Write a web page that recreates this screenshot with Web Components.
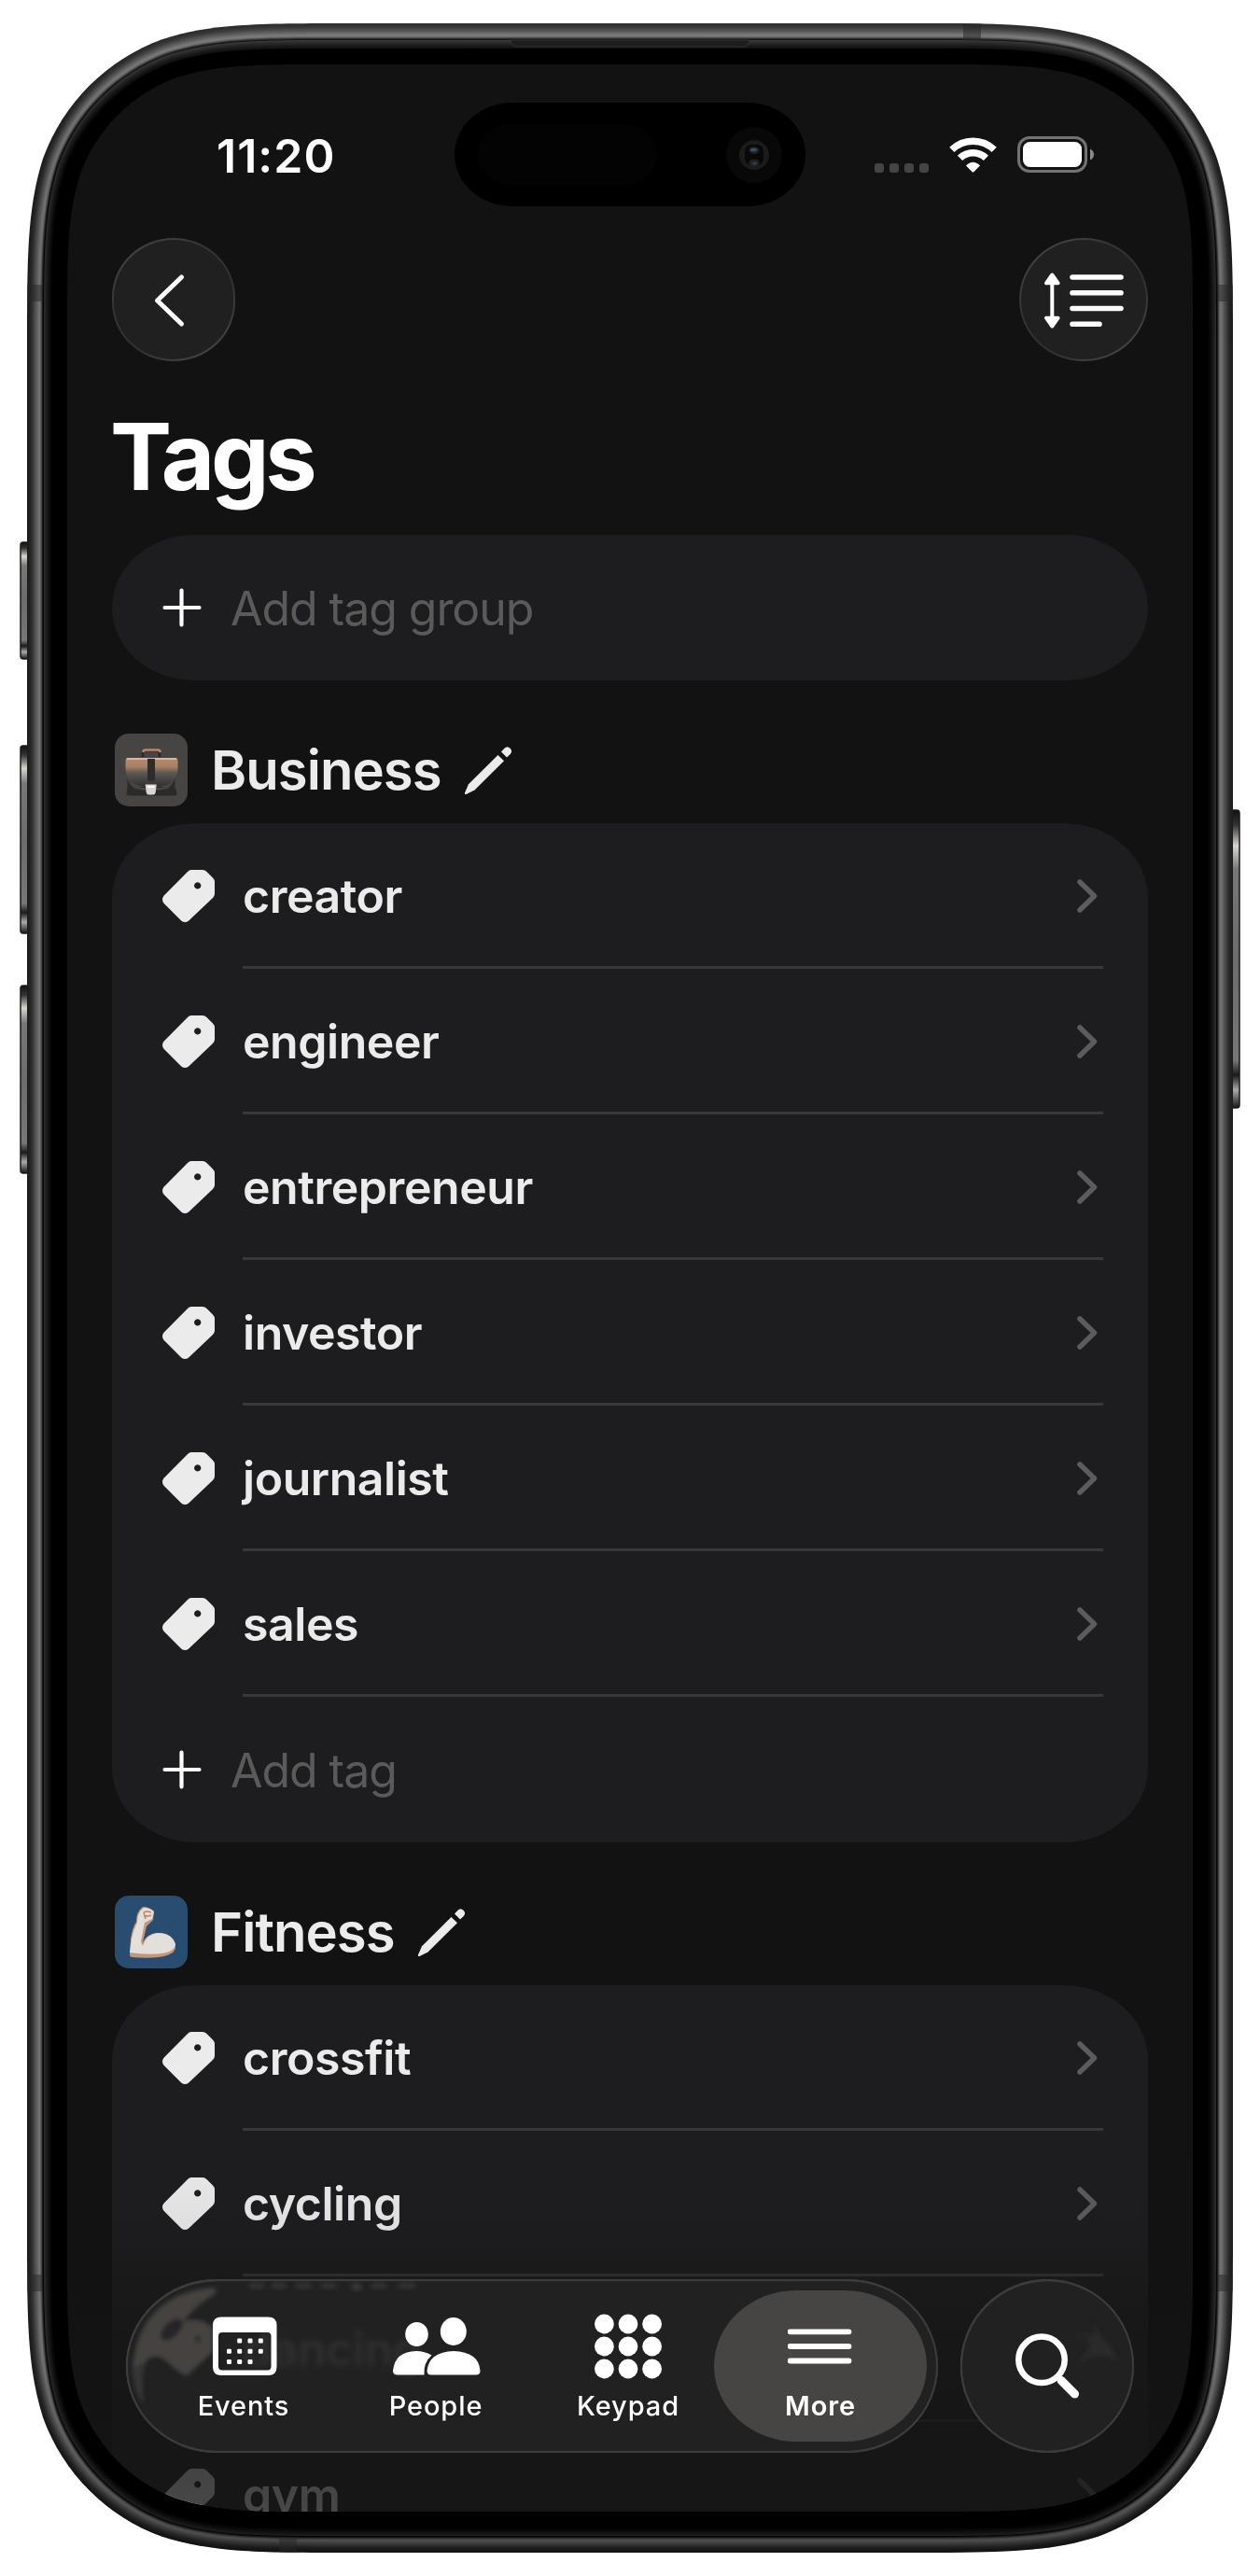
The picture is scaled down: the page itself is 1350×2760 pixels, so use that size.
<!DOCTYPE html>
<html lang="en">
<head>
<meta charset="utf-8">
<title>Tags</title>
<style>
  body {
    margin: 0;
    background: #fff;
    font-family: Inter, "Liberation Sans", sans-serif;
    color: #ebebeb;
  }
</style>
</head>
<body>
<phone-frame>
  <status-bar time="11:20"></status-bar>
  <nav-bar></nav-bar>
  <page-title>Tags</page-title>
  <list-card><add-row>Add tag group</add-row></list-card>

  <tag-section name="Business" icon="briefcase">
    <tag-row>creator</tag-row>
    <tag-row>engineer</tag-row>
    <tag-row>entrepreneur</tag-row>
    <tag-row>investor</tag-row>
    <tag-row>journalist</tag-row>
    <tag-row>sales</tag-row>
    <add-row>Add tag</add-row>
  </tag-section>

  <tag-section name="Fitness" icon="arm">
    <tag-row>crossfit</tag-row>
    <tag-row>cycling</tag-row>
    <tag-row>dancing</tag-row>
    <tag-row>gym</tag-row>
  </tag-section>

  <tab-bar slot="overlay">
    <tab-item icon="events">Events</tab-item>
    <tab-item icon="people">People</tab-item>
    <tab-item icon="keypad">Keypad</tab-item>
    <tab-item icon="more" active>More</tab-item>
  </tab-bar>
</phone-frame>

<script>
// rounded rect with continuous corners
function squircle(x, y, w, h, r) {
  const R = x + w;
  const B = y + h;
  const a = 1.52866 * r, b = 1.08849 * r, c = 0.86841 * r, d = 0.63149 * r;
  const e = 0.37282 * r, f = 0.16906 * r, g = 0.07491 * r;
  return `M${x + a} ${y}H${R - a}
    C${R - b} ${y} ${R - c} ${y} ${R - d} ${y + g}
    C${R - e} ${y + f} ${R - f} ${y + e} ${R - g} ${y + d}
    C${R} ${y + c} ${R} ${y + b} ${R} ${y + a}V${B - a}
    C${R} ${B - b} ${R} ${B - c} ${R - g} ${B - d}
    C${R - f} ${B - e} ${R - e} ${B - f} ${R - d} ${B - g}
    C${R - c} ${B} ${R - b} ${B} ${R - a} ${B}H${x + a}
    C${x + b} ${B} ${x + c} ${B} ${x + d} ${B - g}
    C${x + e} ${B - f} ${x + f} ${B - e} ${x + g} ${B - d}
    C${x} ${B - c} ${x} ${B - b} ${x} ${B - a}V${y + a}
    C${x} ${y + b} ${x} ${y + c} ${x + g} ${y + d}
    C${x + f} ${y + e} ${x + e} ${y + f} ${x + d} ${y + g}
    C${x + c} ${y} ${x + b} ${y} ${x + a} ${y}Z`.replace(/\s+/g, ' ');
}

class PhoneFrame extends HTMLElement {
  constructor() {
    super();
    this.attachShadow({ mode: 'open' });
    this.shadowRoot.innerHTML = `
      <style>
        :host {
          display: grid;
          width: 1350px;
          height: 2760px;
          overflow: hidden;
          background: #fff;
        }
        svg, #screen { grid-area: 1 / 1; }
        svg { display: block; }
        #screen {
          position: relative;
          box-sizing: border-box;
          width: 1206px;
          height: 2622px;
          margin: 69px 0 0 72px;
          overflow: hidden;
          background: #121212;
          clip-path: path('${squircle(0, 0, 1206, 2622, 186)}');
        }
        #content {
          display: flex;
          flex-direction: column;
          padding: 0 48px;
        }
        #fade {
          position: absolute;
          inset: auto 0 0 0;
          height: 392px;
          background: linear-gradient(rgba(19,19,19,0), rgba(19,19,19,.06) 24%,
            rgba(19,19,19,.32) 35%, rgba(19,19,19,.55) 50%, rgba(20,20,20,.8) 78%, rgba(20,20,20,.76));
        }
      </style>
      <svg width="1350" height="2760" viewBox="0 0 1350 2760">
        <defs>
          <linearGradient id="pill" x1="0" y1="0" x2="0" y2="1">
            <stop offset="0" stop-color="#111"/><stop offset=".05" stop-color="#333"/>
            <stop offset=".12" stop-color="#d8d5d0"/><stop offset=".2" stop-color="#777"/>
            <stop offset=".5" stop-color="#6c6c6c"/><stop offset=".84" stop-color="#777"/>
            <stop offset=".89" stop-color="#1a1a1a"/><stop offset=".94" stop-color="#aaa"/>
            <stop offset="1" stop-color="#151515"/>
          </linearGradient>
          <linearGradient id="shade" x1="0" y1="0" x2="0" y2="1">
            <stop offset="0" stop-color="#fff" stop-opacity=".08"/>
            <stop offset=".08" stop-color="#000" stop-opacity="0"/>
            <stop offset=".92" stop-color="#000" stop-opacity="0"/>
            <stop offset="1" stop-color="#000" stop-opacity=".35"/>
          </linearGradient>
        </defs>
        <g fill="url(#pill)" stroke="#1b1b1b" stroke-width="1.5">
          <rect x="22" y="581" width="9" height="125" rx="3"/>
          <rect x="22" y="799" width="9" height="201" rx="3"/>
          <rect x="22" y="1056" width="9" height="201" rx="3"/>
          <rect x="1319" y="868" width="9" height="319" rx="3"/>
        </g>
        <g id="rings"></g>
        <g fill="#262626" opacity=".5">
          <path d="M29 305h16v18h-16zM1305 305h16v18h-16zM29 2437h16v18h-16zM1305 2437h16v18h-16z"/>
          <path d="M1032 25h19v18h-19zM299 2718h19v17h-19z"/>
        </g>
        <path d="M547 43q1 7 6 7h244q5 0 6-7z" fill="#1e1e1e" stroke="#333"/>
      </svg>
      <div id="screen">
        <div id="content"><slot></slot></div>
        <div id="fade"></div>
        <slot name="overlay"></slot>
      </div>
    `;

    // the metal edge is a stack of inset shapes, one shade each
    const shades = ['#1c1c1c', '#1e1e1e', '#222', '#262626', '#2b2b2b', '#323232', '#3b3b3b', '#444',
      '#4c4c4c', '#555', '#5e5e5e', '#686868', '#707070', '#707070', '#606060', '#404040', '#1b1b1b', '#050505',
      '#2c2c2c', '#232323', '#1e1e1e', '#191919', '#141414', '#0f0f0f', '#0a0a0a', '#060606', '#030303', '#000'];
    const rings = this.shadowRoot.querySelector('#rings');
    rings.innerHTML = shades.map((fill, i) =>
      `<path fill="${fill}" d="${squircle(29 + i, 25 + i, 1292 - 2 * i, 2710 - 2 * i, 229 - i)}"/>`
    ).join('') + `<path fill="url(#shade)" d="${squircle(29, 25, 1292, 2710, 229)}"/>
      <path fill="#000" d="${squircle(56, 52, 1238, 2656, 202)}"/>`;
  }
}

class StatusBar extends HTMLElement {
  constructor() {
    super();
    this.attachShadow({ mode: 'open' });
    this.shadowRoot.innerHTML = `
      <style>
        :host {
          display: grid;
          grid-template-columns: 367px 376px 1fr;
          align-items: center;
          height: 111px;
          padding-top: 41px;
          margin-bottom: 34px;
        }
        time {
          padding: 2px 0 0 112px;
          font-size: 50px;
          font-weight: 600;
          letter-spacing: 1px;
          color: #fff;
        }
        #island {
          height: 111px;
          box-sizing: border-box;
          background: #000;
          border-radius: 62px / 55.5px;
          display: flex;
          align-items: center;
          justify-content: space-between;
          padding: 0 25px 0 24px;
        }
        #sensor {
          width: 193px;
          height: 65px;
          border-radius: 33px;
          background: #030303;
        }
        #status {
          display: flex;
          align-items: center;
          gap: 22px;
          padding-left: 74px;
          padding-top: 1px;
        }
      </style>
      <time></time>
      <div id="island">
        <div id="sensor"></div>
        <svg width="60" height="60" viewBox="0 0 60 60">
          <circle cx="30" cy="30" r="30" fill="#080808"/>
          <circle cx="30" cy="30" r="16" fill="#1b1b1c"/>
          <rect x="20" y="19" width="20" height="22" rx="7" fill="#080808"/>
          <ellipse cx="30" cy="25" rx="5.5" ry="4" fill="#222"/>
          <ellipse cx="30" cy="38.5" rx="5.5" ry="4" fill="#222"/>
          <ellipse cx="29.5" cy="24.5" rx="3.5" ry="1.8" fill="#2c5478"/>
          <ellipse cx="30.5" cy="39" rx="2.5" ry="1.2" fill="#2b4256"/>
        </svg>
      </div>
      <div id="status">
        <svg width="58" height="38" viewBox="0 0 58 38" fill="#444">
          <rect y="28" width="10" height="10" rx="3"/><rect x="16" y="28" width="10" height="10" rx="3"/>
          <rect x="32" y="28" width="10" height="10" rx="3"/><rect x="48" y="28" width="10" height="10" rx="3"/>
        </svg>
        <svg width="51" height="38" viewBox="0 0 51 38">
          <g fill="none" stroke="#fff" stroke-width="7.5">
            <path d="M2.8 13.4a32.5 32.5 0 0 1 45.4 0"/>
            <path d="M11.6 22.4a20 20 0 0 1 27.8 0"/>
          </g>
          <path d="M18 30.5q7.500-7.500 15 0l-6.700 6.700q-.8.700-1.600 0z" fill="#fff"/>
        </svg>
        <svg width="82" height="40" viewBox="0 0 82 40">
          <rect x="1.5" y="1.5" width="72" height="36" rx="11.5" fill="none" stroke="#727272" stroke-width="3"/>
          <rect x="6" y="6" width="63" height="27" rx="7.5" fill="#fff"/>
          <path d="M78 13.500q4 2 4 6t-4 6z" fill="#8a8a8a"/>
        </svg>
      </div>
    `;
    this.shadowRoot.querySelector('time').textContent = this.getAttribute('time');
  }
}

class NavBar extends HTMLElement {
  constructor() {
    super();
    this.attachShadow({ mode: 'open' });
    this.shadowRoot.innerHTML = `
      <style>
        :host {
          display: flex;
          justify-content: space-between;
        }
        button {
          all: unset;
          box-sizing: border-box;
          width: 132px;
          height: 132px;
          border-radius: 69px / 66px;
          border: 2px solid transparent;
          background: linear-gradient(#202020, #202020) padding-box,
            linear-gradient(145deg, #4a4a4a, #343434 35%, #303030 60%, #4c4c4c) border-box;
        }
        #sort { width: 138px; }
        svg { display: block; margin: -2px; }
      </style>
      <button aria-label="Back">
        <svg width="132" height="132" viewBox="0 0 132 132" fill="none" stroke="#fff" stroke-width="5"
          stroke-linecap="round" stroke-linejoin="round"><path d="M74.500 42 48.500 67l26 25"/></svg>
      </button>
      <button id="sort" aria-label="Sort">
        <svg width="138" height="132" viewBox="0 0 138 132" stroke="#fff" stroke-linecap="round" stroke-linejoin="round">
          <path d="M35.300 48v38" stroke-width="4"/>
          <path d="M35.300 39.500 29 48.300h12.600zM35.300 94.500 29 85.700h12.600z" fill="#fff" stroke-width="4"/>
          <path d="M57 42h52M57 58.700h52M57 75.500h52M57 92.300h29" stroke-width="5.6"/>
        </svg>
      </button>
    `;
  }
}

class PageTitle extends HTMLElement {
  constructor() {
    super();
    this.attachShadow({ mode: 'open' });
    this.shadowRoot.innerHTML = `
      <style>
        :host { display: block; height: 186px; }
        h1 {
          margin: 0 0 0 -2px;
          padding-top: 17px;
          line-height: 170px;
          font-size: 99px;
          font-weight: 700;
          letter-spacing: -4.2px;
          color: #fff;
        }
      </style>
      <h1><slot></slot></h1>
    `;
  }
}

class ListCard extends HTMLElement {
  constructor() {
    super();
    this.attachShadow({ mode: 'open' });
    this.shadowRoot.innerHTML = `
      <style>
        :host {
          display: flex;
          flex-direction: column;
          background: #1d1d1f;
          border-radius: 90px / 80px;
          overflow: hidden;
        }
      </style>
      <slot></slot>
    `;
  }
}

class TagRow extends HTMLElement {
  constructor() {
    super();
    this.attachShadow({ mode: 'open' });
    this.shadowRoot.innerHTML = `
      <style>
        :host {
          display: flex;
          box-sizing: border-box;
          height: 156px;
          padding: 0 48px 0 54px;
        }
        .tag { margin: 50px 30px 0 0; flex: none; }
        div {
          flex: 1;
          display: flex;
          align-items: center;
          justify-content: space-between;
          border-bottom: 3px solid #38383a;
          padding: 3px 6px 0 0;
          font-size: 50px;
          font-weight: 600;
          letter-spacing: -.45px;
        }
      </style>
      <svg class="tag" width="56" height="56" viewBox="0 0 56 56">
        <path fill="#ebebeb" fill-rule="evenodd" d="M31 0h12q2.500 0 4.500 2l6.500 6.500q2 2 2 4.500v12.500q0 2.500-2 4.500L28.200 54.500q-4 3-8 0L1.500 35.800q-3-4 0-8L27 2q1.700-2 4-2zM37.700 13.300a3.600 3.600 0 1 0 .01 0z"/>
      </svg>
      <div>
        <span><slot></slot></span>
        <svg width="22" height="38" viewBox="0 0 22 38" fill="none" stroke="#5c5c5e" stroke-width="5.5"
          stroke-linecap="round" stroke-linejoin="round"><path d="M3 4l15.500 15L3 34"/></svg>
      </div>
    `;
  }
}

class AddRow extends HTMLElement {
  constructor() {
    super();
    this.attachShadow({ mode: 'open' });
    this.shadowRoot.innerHTML = `
      <style>
        :host {
          display: flex;
          align-items: center;
          gap: 31px;
          height: 156px;
          padding-left: 54px;
          font-size: 50px;
          letter-spacing: -1.05px;
          color: #5a5a5a;
        }
        span { padding-top: 2px; }
      </style>
      <svg width="42" height="42" viewBox="0 0 42 42" stroke="#fff" stroke-width="4.2" stroke-linecap="round">
        <path d="M20.500 2.500v37M2.500 21h37"/>
      </svg>
      <span><slot></slot></span>
    `;
  }
}

const sectionIcons = {
  briefcase: `
    <rect width="78" height="78" rx="15" fill="#464543"/>
    <path d="M13.500 48q2 6 10 9h31q8-3 10-9v10q2 3 2 6 0 2.500-3 2.500h-48q-3 0-3-2.500 0-3 1-6z" fill="#2a2a2a"/>
    <path d="M13.500 48q6 8 16 10h20q10-2 15-10-3 8-8 11-17 4-35 0-5-3-8-11z" fill="#464543"/>
    <path d="M14 26h51q2.500 0 2.500 3v8q0 13-12 18-16 5-32 0-12-5-12-18v-8q0-3 2.500-3z" fill="url(#leather)"/>
    <path d="M30 25v-3q0-4 4-4h10q4 0 4 4v3" fill="none" stroke="#262626" stroke-width="2.5"/>
    <path d="M30.500 19q.5-1.500 3-1.500h12q2.500 0 3 1.500" fill="none" stroke="#b98a68" stroke-width="2.6" stroke-linecap="round"/>
    <path d="M13 27h53" stroke="#cbbbb3" stroke-width="1.8"/>
    <path d="M35 27h8v23q-4 2-8 0z" fill="#2d2c2b"/>
    <path d="M32.700 54.500h12l-1 8.500q-.5 2.500-2.500 2.500h-5q-2 0-2.500-2.500z" fill="#d6d6d4"/>
    <path d="M35 57h7.500" stroke="#f7f7f7" stroke-width="2"/>`,
  arm: `
    <rect width="78" height="78" rx="15" fill="#284d70"/>
    <path d="M16 63 17 46q2-12 6-18 0-11 7-16 7 0 12 5l-1 9-7 7-4 17q4-9 16-10 16 0 19 13 1 8-9 11-12 4-37 2-3 0-3-3z" fill="#c4977b"/>
    <path d="M16 61 18 46q3-12 6-17 0-11 7-16 6 0 11 4l-2 8-8 4-4 20 2 5q4-13 16-14 15 0 19 12-1 8-15 10-14 2-34-1z" fill="#e3dfdb"/>
    <path d="M31 18q3-2 8 0m-8 3q4 2 8 0m-8-3 2 7" fill="none" stroke="#b88768" stroke-width="1.5"/>`
};

class TagSection extends HTMLElement {
  constructor() {
    super();
    this.attachShadow({ mode: 'open' });
    this.shadowRoot.innerHTML = `
      <style>
        :host { display: block; padding-top: 57px; }
        header {
          display: flex;
          align-items: center;
          height: 78px;
          padding-left: 3px;
          margin-bottom: 18px;
        }
        h2 {
          margin: 0 25px 0 25px;
          font-size: 58px;
          font-weight: 600;
          letter-spacing: -.95px;
        }
      </style>
      <header>
        <svg width="78" height="78" viewBox="0 0 78 78">
          <defs><linearGradient id="leather" x1="0" y1="0" x2="0" y2="1">
            <stop offset="0" stop-color="#b78b6c"/><stop offset=".3" stop-color="#a98063"/>
            <stop offset=".5" stop-color="#5c5855"/><stop offset="1" stop-color="#2e2e2e"/>
          </linearGradient></defs>
          ${sectionIcons[this.getAttribute('icon')]}
        </svg>
        <h2>${this.getAttribute('name')}</h2>
        <svg width="51" height="51" viewBox="0 0 51 51" fill="#ebebeb">
          <path d="M35.500 9l6.500 6.200L10.500 46.500 1.500 51q-2 .5-1.500-1.500L4 40.200z"/>
          <path d="M39 5.500l3.500-3.700q3-3 6 0t.3 6.200L45 11.600z"/>
        </svg>
      </header>
      <list-card><slot></slot></list-card>
    `;
  }
}

class TabBar extends HTMLElement {
  constructor() {
    super();
    this.attachShadow({ mode: 'open' });
    this.shadowRoot.innerHTML = `
      <style>
        /* floats over the end of the list */
        :host {
          position: absolute;
          left: 63px;
          bottom: 63px;
          display: flex;
          gap: 24px;
        }
        nav, button {
          all: unset;
          position: relative;
          box-sizing: border-box;
          height: 186px;
          border-radius: 93px;
          overflow: hidden;
          background: rgba(35,35,35,.82);
          backdrop-filter: blur(3px);
          box-shadow: inset 0 0 0 2px #3c3c3c, inset 1px 2px 1px #4a4a4a, inset 0 -2px 1px #484848;
        }
        nav { display: flex; width: 870px; padding: 12px; border-radius: 97px / 93px; }
        button { width: 186px; }
        .glass { position: absolute; left: 0; top: 0; }
        .lens { display: block; position: relative; }
      </style>
      <nav>
        <svg class="glass" width="330" height="186" viewBox="0 0 330 186">
          <defs><filter id="soft"><feGaussianBlur stdDeviation="2.2"/></filter></defs>
          <g filter="url(#soft)">
            <path d="M96 9Q60 11 38 29 11 50 7 95q2 27 11 37-4-37 6-47 12-6 22 5l14 11q4 3 8-1l25-23V52l-11-7q-12-3-20 0 8-13 34-30z" fill="#454340"/>
            <path d="M8 95q2 27 11 37-4-37 6-47z" fill="#343436"/>
            <ellipse cx="49" cy="54" rx="15" ry="8" transform="rotate(-45 49 54)" fill="#28282a"/>
            <circle cx="77" cy="64" r="3" fill="#252525"/>
          </g>
          <g fill="#353537" filter="url(#soft)">
            <ellipse cx="140" cy="7" rx="10" ry="3"/><ellipse cx="164" cy="7" rx="9" ry="3"/>
            <ellipse cx="190" cy="7" rx="10" ry="3"/><ellipse cx="217" cy="7" rx="10" ry="3"/>
            <ellipse cx="247" cy="8" rx="6" ry="5"/><ellipse cx="271" cy="7" rx="10" ry="3"/>
            <ellipse cx="301" cy="7" rx="11" ry="3"/>
          </g>
        </svg>
        <slot></slot>
      </nav>
      <button aria-label="Search">
        <svg class="lens" width="186" height="186" viewBox="0 0 186 186" fill="none" stroke="#fff" stroke-linecap="round">
          <defs><filter id="haze"><feGaussianBlur stdDeviation="2.5"/></filter></defs>
          <path d="M143 42q3 17 18 30l10 18q-18-15-45-2 14-13 15-20-4-4-10-11l13 5z" fill="#292929" stroke="none" filter="url(#haze)"/>
          <circle cx="87" cy="86.3" r="24.7" stroke-width="6.5"/>
          <path d="M105 105l2 2" stroke-width="6"/>
          <path d="M108 108.500l14.500 14.500" stroke-width="9"/>
        </svg>
      </button>
    `;
  }
}

const dots = (xs, ys, draw) => ys.map((y, row) => xs.map((x, col) => draw(x, y, row, col)).join('')).join('');

const tabIcons = {
  events: `
    <svg width="70" height="70" viewBox="-1.5 0 70 70" fill="#fff" overflow="visible">
      <path fill-rule="evenodd" d="M9.500 3.500h50.500q9 0 9 9v44.500q0 9-9 9H9.500q-9 0-9-9V12.500q0-9 9-9zM10.500 20q-4 0-4 4v32.500q0 4 4 4h48.500q4 0 4-4V24q0-4-4-4z"/>
      ${dots([15.5, 26.7, 38, 49.3], [26.5, 37.7, 49], (x, y, row, col) =>
        (row === 0 && col === 0) || (row === 2 && col === 3) ? '' : `<rect x="${x}" y="${y}" width="5" height="5" rx="1.2"/>`)}
    </svg>`,
  people: `
    <svg width="94" height="70" viewBox="-1 0 94 70" fill="#fff" overflow="visible">
      <ellipse cx="25.5" cy="22" rx="12.3" ry="13"/>
      <ellipse cx="64.8" cy="19" rx="14" ry="15"/>
      <path d="M0 61Q2 40.500 25 40q9 0 16.500 4.500-9 8-8 21H5q-5 0-5-4.500z"/>
      <path d="M36.500 61q2-20 28.500-21 27 1 28.500 21 0 4.500-4.500 4.500H41q-4.500 0-4.500-4.500z"/>
    </svg>`,
  keypad: `
    <svg width="72" height="70" viewBox="0 0 72 70" fill="#fff">
      ${dots([10.4, 36, 61.6], [11, 35, 59], (x, y) => `<circle cx="${x}" cy="${y}" r="10.4"/>`)}
    </svg>`,
  more: `
    <svg width="70" height="70" viewBox="1 0 70 70" stroke="#fff" stroke-width="5.8" stroke-linecap="round">
      <path d="M3.500 19.300h63M3.500 35h63M3.500 50.500h63"/>
    </svg>`
};

class TabItem extends HTMLElement {
  constructor() {
    super();
    this.attachShadow({ mode: 'open' });
    this.shadowRoot.innerHTML = `
      <style>
        :host {
          position: relative;
          display: flex;
          flex-direction: column;
          align-items: center;
          box-sizing: border-box;
          width: 228px;
          height: 162px;
          padding-top: 25px;
          border-radius: 88px / 81px;
          font-size: 29px;
          font-weight: 500;
          letter-spacing: .9px;
          line-height: 36px;
          color: #fff;
        }
        :host(:not(:first-of-type)) { margin-left: -22px; }
        :host([active]) {
          background: #464543;
          font-weight: 600;
        }
        svg { display: block; margin-bottom: 11px; }
      </style>
      ${tabIcons[this.getAttribute('icon')]}
      <slot></slot>
    `;
  }
}

customElements.define('phone-frame', PhoneFrame);
customElements.define('status-bar', StatusBar);
customElements.define('nav-bar', NavBar);
customElements.define('page-title', PageTitle);
customElements.define('list-card', ListCard);
customElements.define('tag-row', TagRow);
customElements.define('add-row', AddRow);
customElements.define('tag-section', TagSection);
customElements.define('tab-bar', TabBar);
customElements.define('tab-item', TabItem);
</script>
</body>
</html>
